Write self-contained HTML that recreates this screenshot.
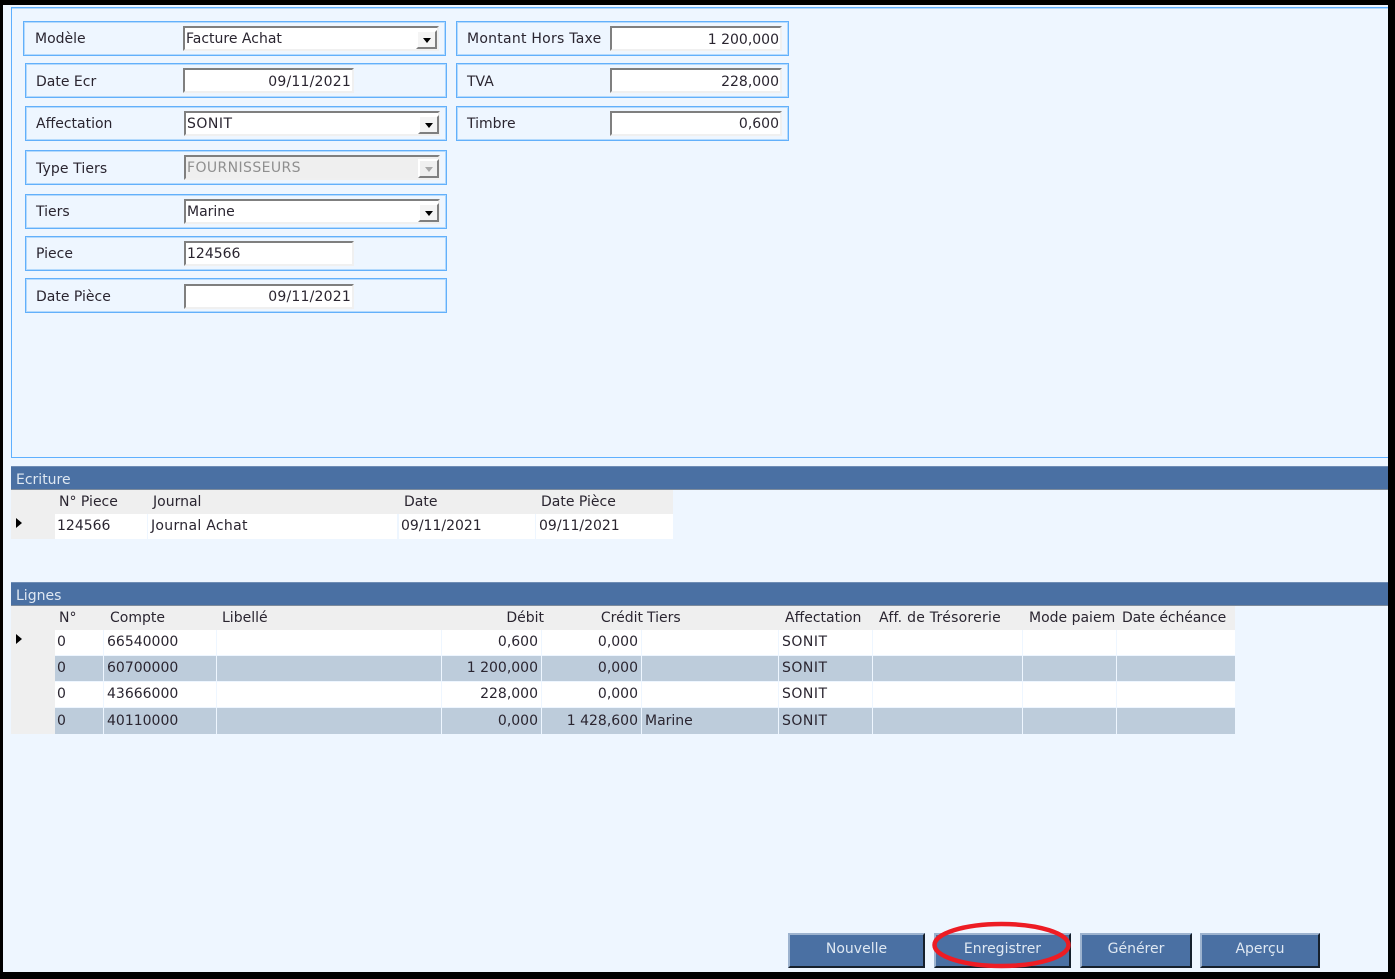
<!DOCTYPE html>
<html><head><meta charset="utf-8"><style>
html,body{margin:0;padding:0;background:#000;}
#p{position:relative;width:1395px;height:979px;overflow:hidden;background:#000;font:14px "DejaVu Sans","Liberation Sans",sans-serif;color:#2a2530;}
#p div{position:absolute;box-sizing:border-box;white-space:pre;}
.f{border:1px solid #62b0fb;box-shadow:inset 0 0 0 1px #b4dafd;height:35px;}
.l{line-height:21px;height:21px;}
.i{background:#fff;border:2px solid;border-color:#7f7f7f #f0f0f0 #f0f0f0 #7f7f7f;line-height:23px;padding:0 1px 0 1px;height:25px;color:#2a2530;}
.r{text-align:right;}
.b{background:#f4f4f4;border:2px solid;border-color:#fff #7f7f7f #7f7f7f #fff;width:21px;height:19px;}
.b:after{content:"";position:absolute;left:5px;top:6px;border:4px solid transparent;border-top:5px solid #000;border-bottom:0;}
.b.d{background:#efefef;}
.b.d:after{border-top-color:#a8a8a8;}
.t{background:#4a70a3;color:#dfe8f2;line-height:26px;padding-left:5px;height:24px;border-top:1px solid #6f8db5;border-bottom:1px solid #7d8b9c;left:11px;width:1377px;}
.h{background:#efefef;height:24px;}
.c{line-height:25px;height:25px;background:#fff;padding:0 3px;}
.a{background:#bdccdb;}
.x{line-height:25px;height:25px;}
.rh{background:#efefef;}
.m{left:16px;width:0;height:0;border:5px solid transparent;border-left:6px solid #000;border-right:0;}
.btn{background:#4a70a3;color:#dfe8f2;text-align:center;line-height:28px;height:35px;top:933px;border:2px solid;border-color:#9db3cf #16202c #16202c #9db3cf;}
.s{letter-spacing:.2px;}
.s2{letter-spacing:.3px;}
.v{line-height:24px;}
</style></head><body><div id="p">
<div style="left:3px;top:5px;width:1385px;height:967px;background:#eef6ff"></div>
<div style="left:11px;top:7px;width:1377px;height:451px;border:1px solid #5fb0ff;border-right:0;box-shadow:inset 0 1px 0 #b4dafd"></div>

<div class="f" style="left:23px;top:21px;width:423px"></div><div class="l" style="left:35px;top:29px">Modèle</div>
<div class="i" style="left:183px;top:26px;width:256px">Facture Achat</div><div class="b" style="left:416px;top:30px"></div>
<div class="f" style="left:25px;top:63px;width:422px"></div><div class="l" style="left:36px;top:72px">Date Ecr</div>
<div class="i r s v" style="left:183px;top:68px;width:171px">09/11/2021</div>
<div class="f" style="left:25px;top:106px;width:422px"></div><div class="l" style="left:36px;top:114px">Affectation</div>
<div class="i" style="left:184px;top:111px;width:256px;letter-spacing:.5px">SONIT</div><div class="b" style="left:418px;top:115px"></div>
<div class="f" style="left:25px;top:150px;width:422px"></div><div class="l" style="left:36px;top:159px;letter-spacing:.1px">Type Tiers</div>
<div class="i" style="left:184px;top:155px;width:256px;background:#efefef;color:#8f8f8f;letter-spacing:.4px">FOURNISSEURS</div><div class="b d" style="left:418px;top:159px"></div>
<div class="f" style="left:25px;top:194px;width:422px"></div><div class="l" style="left:36px;top:202px">Tiers</div>
<div class="i" style="left:184px;top:199px;width:256px">Marine</div><div class="b" style="left:418px;top:203px"></div>
<div class="f" style="left:25px;top:236px;width:422px"></div><div class="l" style="left:36px;top:244px">Piece</div>
<div class="i" style="left:184px;top:241px;width:170px">124566</div>
<div class="f" style="left:25px;top:278px;width:422px"></div><div class="l" style="left:36px;top:287px">Date Pièce</div>
<div class="i r s" style="left:184px;top:284px;width:170px">09/11/2021</div>

<div class="f" style="left:456px;top:21px;width:333px"></div><div class="l" style="left:467px;top:29px;letter-spacing:.25px">Montant Hors Taxe</div>
<div class="i r v" style="left:610px;top:26px;width:172px">1 200,000</div>
<div class="f" style="left:456px;top:63px;width:333px"></div><div class="l" style="left:467px;top:72px">TVA</div>
<div class="i r v" style="left:610px;top:68px;width:172px">228,000</div>
<div class="f" style="left:456px;top:106px;width:333px"></div><div class="l" style="left:467px;top:114px">Timbre</div>
<div class="i r" style="left:610px;top:111px;width:172px">0,600</div>

<div class="t" style="top:466px">Ecriture</div>
<div class="h" style="left:11px;top:490px;width:662px"></div>
<div class="rh" style="left:11px;top:514px;width:44px;height:25px"></div>
<div class="m" style="top:518px"></div>
<div class="x" style="left:59px;top:490px">N° Piece</div><div class="x" style="left:153px;top:490px">Journal</div><div class="x" style="left:404px;top:490px">Date</div><div class="x" style="left:541px;top:490px">Date Pièce</div>
<div class="c" style="left:55px;top:514px;width:92px;padding-left:2px">124566</div>
<div class="c s2" style="left:148px;top:514px;width:249px">Journal Achat</div>
<div class="c" style="left:399px;top:514px;width:136px;padding-left:2px">09/11/2021</div>
<div class="c" style="left:536px;top:514px;width:137px">09/11/2021</div>

<div class="t" style="top:582px">Lignes</div>
<div class="h" style="left:11px;top:606px;width:1224px"></div>
<div class="rh" style="left:11px;top:630px;width:44px;height:104px"></div>
<div class="m" style="top:634px"></div>
<div class="x" style="left:59px;top:606px">N°</div><div class="x" style="left:110px;top:606px">Compte</div><div class="x" style="left:222px;top:606px">Libellé</div>
<div class="x r" style="left:444px;top:606px;width:100px">Débit</div><div class="x r" style="left:543px;top:606px;width:100px">Crédit</div><div class="x" style="left:647px;top:606px">Tiers</div>
<div class="x" style="left:785px;top:606px">Affectation</div><div class="x" style="left:879px;top:606px;letter-spacing:.25px">Aff. de Trésorerie</div><div class="x" style="left:1029px;top:606px">Mode paiem</div><div class="x" style="left:1122px;top:606px;letter-spacing:-.1px">Date échéance</div>

<div class="c" style="left:55px;top:630px;width:48px;padding-left:2px">0</div><div class="c" style="left:104px;top:630px;width:112px">66540000</div><div class="c" style="left:217px;top:630px;width:224px"></div><div class="c r" style="left:442px;top:630px;width:99px">0,600</div><div class="c r" style="left:542px;top:630px;width:99px">0,000</div><div class="c" style="left:642px;top:630px;width:136px"></div><div class="c" style="left:779px;top:630px;width:93px;letter-spacing:.5px">SONIT</div><div class="c" style="left:873px;top:630px;width:149px"></div><div class="c" style="left:1023px;top:630px;width:93px"></div><div class="c" style="left:1117px;top:630px;width:118px"></div>

<div class="c a" style="left:55px;top:656px;width:48px;padding-left:2px">0</div><div class="c a" style="left:104px;top:656px;width:112px">60700000</div><div class="c a" style="left:217px;top:656px;width:224px"></div><div class="c a r" style="left:442px;top:656px;width:99px">1 200,000</div><div class="c a r" style="left:542px;top:656px;width:99px">0,000</div><div class="c a" style="left:642px;top:656px;width:136px"></div><div class="c a" style="left:779px;top:656px;width:93px;letter-spacing:.5px">SONIT</div><div class="c a" style="left:873px;top:656px;width:149px"></div><div class="c a" style="left:1023px;top:656px;width:93px"></div><div class="c a" style="left:1117px;top:656px;width:118px"></div>

<div class="c" style="left:55px;top:682px;width:48px;padding-left:2px">0</div><div class="c" style="left:104px;top:682px;width:112px">43666000</div><div class="c" style="left:217px;top:682px;width:224px"></div><div class="c r" style="left:442px;top:682px;width:99px">228,000</div><div class="c r" style="left:542px;top:682px;width:99px">0,000</div><div class="c" style="left:642px;top:682px;width:136px"></div><div class="c" style="left:779px;top:682px;width:93px;letter-spacing:.5px">SONIT</div><div class="c" style="left:873px;top:682px;width:149px"></div><div class="c" style="left:1023px;top:682px;width:93px"></div><div class="c" style="left:1117px;top:682px;width:118px"></div>

<div class="c a" style="left:55px;top:708px;width:48px;height:26px;line-height:27px;padding-left:2px">0</div><div class="c a" style="left:104px;top:708px;width:112px;height:26px;line-height:27px">40110000</div><div class="c a" style="left:217px;top:708px;width:224px;height:26px"></div><div class="c a r" style="left:442px;top:708px;width:99px;height:26px;line-height:27px">0,000</div><div class="c a r" style="left:542px;top:708px;width:99px;height:26px;line-height:27px">1 428,600</div><div class="c a" style="left:642px;top:708px;width:136px;height:26px;line-height:27px">Marine</div><div class="c a" style="left:779px;top:708px;width:93px;height:26px;line-height:27px;letter-spacing:.5px">SONIT</div><div class="c a" style="left:873px;top:708px;width:149px;height:26px"></div><div class="c a" style="left:1023px;top:708px;width:93px;height:26px"></div><div class="c a" style="left:1117px;top:708px;width:118px;height:26px"></div>

<div class="btn" style="left:788px;width:137px">Nouvelle</div>
<div class="btn" style="left:934px;width:137px">Enregistrer</div>
<div class="btn" style="left:1080px;width:112px">Générer</div>
<div class="btn" style="left:1200px;width:120px">Aperçu</div>
<svg style="position:absolute;left:925px;top:915px" width="155" height="60"><ellipse cx="76.500" cy="30" rx="67" ry="21" fill="none" stroke="#ed1c24" stroke-width="4.500"/></svg>
</div></body></html>
